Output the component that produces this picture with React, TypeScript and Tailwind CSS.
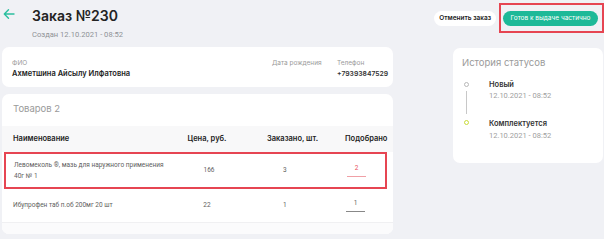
export default function App() {
  return (
    <div className="h-[239px] w-[604px] overflow-hidden bg-[#f0f1f5] font-['Inter','Noto_Sans',sans-serif] text-[#222]">
      {/* top bar */}
      <div className="flex h-[47px] items-start">
        <div className="flex w-[32px] pl-[3px] pt-[8px]">
          <svg width="12" height="12" viewBox="0 0 12 12" fill="none" stroke="#2bbf9f" strokeWidth="1.4" strokeLinecap="round" strokeLinejoin="round">
            <path d="M11 6H1.5M5.5 1.8 1.3 6l4.2 4.2" />
          </svg>
        </div>
        <div className="flex flex-col pt-[8px]">
          <span className="text-[14px] font-semibold leading-[16px] text-[#232323]">Заказ №230</span>
          <span className="mt-[6px] font-['Roboto',sans-serif] text-[7.6px] leading-[10px] text-[#8f9196]">Создан 12.10.2021 - 08:52</span>
        </div>
        <div className="ml-auto flex items-center pt-[3px]">
          <button className="h-[15px] rounded-full bg-white px-[5px] text-[6.5px] font-semibold leading-[15px] text-[#222]">
            Отменить заказ
          </button>
          <div className="ml-[3px] flex h-[30px] w-[105px] items-center border-2 border-[#e64552] pl-[2px]">
            <button className="h-[15px] w-[95px] rounded-full bg-[#1db998] text-[6.5px] leading-[15px] text-white">
              Готов к выдаче частично
            </button>
          </div>
        </div>
      </div>

      <div className="flex">
        {/* left column */}
        <div className="ml-[2px] flex w-[391px] flex-col gap-[7px]">
          <div className="flex h-[40px] rounded-[7px] bg-white pl-[10px] pt-[12px]">
            <div className="flex w-[260px] shrink-0 flex-col">
              <span className="text-[6.5px] leading-[8px] text-[#9a9a9a]">ФИО</span>
              <span className="mt-[2px] text-[7.5px] font-semibold leading-[10px] text-[#222]">Ахметшина Айсылу Илфатовна</span>
            </div>
            <div className="flex w-[65px] shrink-0 flex-col">
              <span className="text-[6.5px] leading-[8px] text-[#9a9a9a]">Дата рождения</span>
            </div>
            <div className="flex shrink-0 flex-col">
              <span className="text-[6.5px] leading-[8px] text-[#9a9a9a]">Телефон</span>
              <span className="mt-[2px] text-[6.8px] font-semibold leading-[10px] text-[#333]">+79393847529</span>
            </div>
          </div>

          <div className="flex h-[140px] flex-col overflow-hidden rounded-[7px] bg-white">
            <div className="h-[32px] pl-[11px] pt-[9px] text-[9.5px] leading-[12px] text-[#9a9a9a]">Товаров 2</div>
            <div className="flex h-[26px] items-center bg-[#f8f8f9] text-[7.5px] font-semibold text-[#222]">
              <span className="w-[180px] pl-[11px]">Наименование</span>
              <span className="w-[50px] text-center">Цена, руб.</span>
              <span className="w-[90px] pl-[35px]">Заказано, шт.</span>
              <span className="w-[65px] pl-[23px]">Подобрано</span>
            </div>
            <div className="ml-[2px] flex h-[37px] w-[383px] items-center border-2 border-[#e64552] font-['Roboto',sans-serif] text-[6.5px] text-[#606060]">
              <span className="w-[178px] pl-[8px] leading-[11px]">
                Левомеколь ®, мазь для наружного применения
                <br />
                40г № 1
              </span>
              <span className="w-[50px] text-center">166</span>
              <span className="w-[90px] pl-[49px]">3</span>
              <span className="ml-[23px] w-[19px] border-b border-[#f0a0a6] pb-[2px] text-center text-[#e8505b]">2</span>
            </div>
            <div className="flex h-[34px] items-center border-b border-[#f0f0f2] font-['Roboto',sans-serif] text-[6.5px] text-[#606060]">
              <span className="w-[180px] pl-[11px]">Ибупрофен таб п.об 200мг 20 шт</span>
              <span className="w-[50px] text-center">22</span>
              <span className="w-[90px] pl-[51px]">1</span>
              <span className="ml-[24px] w-[19px] border-b border-[#888] pb-[2px] text-center">1</span>
            </div>
            <div className="flex-1 bg-[#fbfbfc]" />
          </div>
        </div>

        {/* right column */}
        <div className="ml-auto mr-[1px] mt-[1px] flex h-[115px] w-[150px] flex-col rounded-[7px] bg-white pl-[9px] pt-[9px]">
          <span className="text-[9.5px] leading-[12px] text-[#9a9a9a]">История статусов</span>
          <div className="mt-[11px] flex">
            <div className="flex w-[9px] flex-col items-center pt-[2px]">
              <span className="h-[5px] w-[5px] rounded-full border border-[#b8b8b8]" />
              <span className="mt-[4px] h-[23px] w-px bg-[#c8c8c8]" />
              <span className="mt-[6px] h-[5px] w-[5px] rounded-full border border-[#c9dc3a]" />
            </div>
            <div className="ml-[18px] flex flex-col">
              <span className="text-[7.5px] font-semibold leading-[10px] text-[#333]">Новый</span>
              <span className="mt-[1px] font-['Roboto',sans-serif] text-[7.5px] leading-[10px] text-[#a0a0a0]">12.10.2021 - 08:52</span>
              <span className="mt-[18px] text-[7.5px] font-semibold leading-[10px] text-[#333]">Комплектуется</span>
              <span className="mt-[2px] font-['Roboto',sans-serif] text-[7.5px] leading-[10px] text-[#a0a0a0]">12.10.2021 - 08:52</span>
            </div>
          </div>
        </div>
      </div>
    </div>
  );
}
